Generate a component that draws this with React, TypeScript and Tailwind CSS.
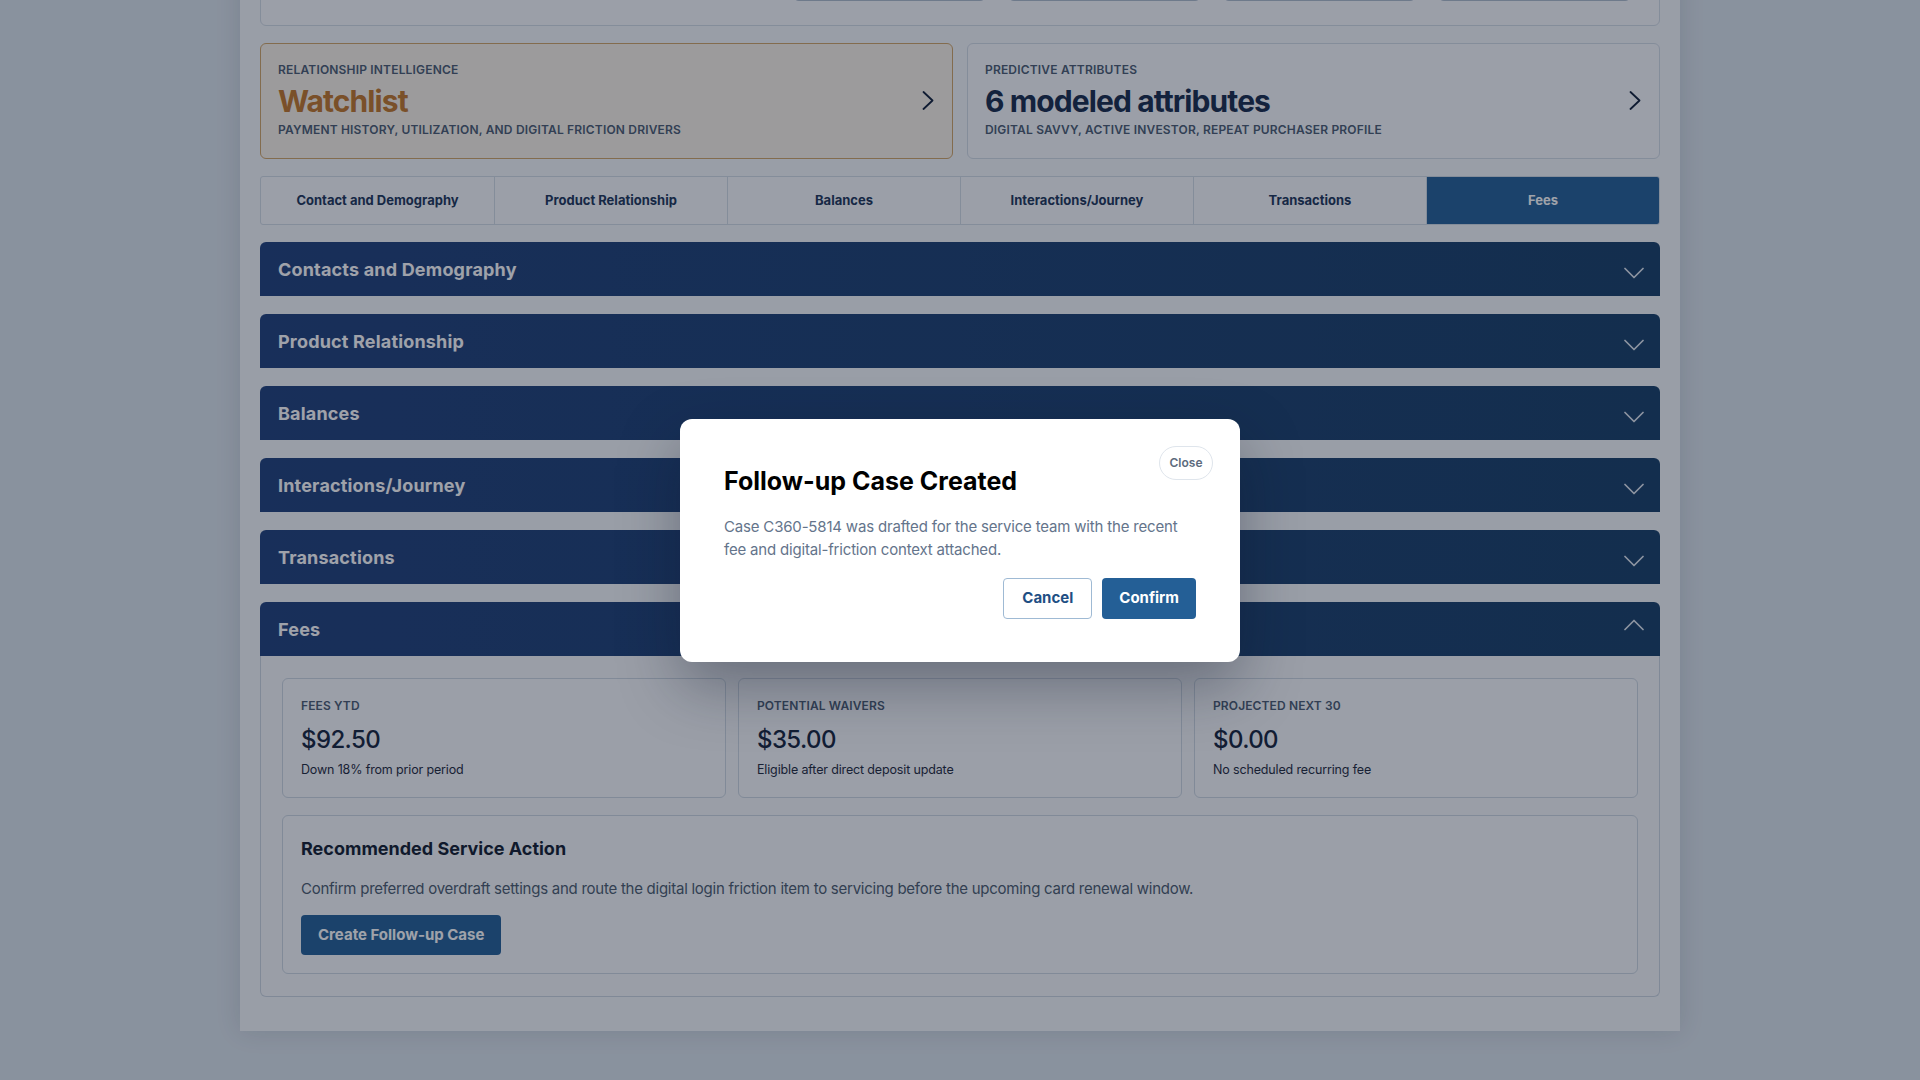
import React from 'react';

const sections = ['Contacts and Demography', 'Product Relationship', 'Balances', 'Interactions/Journey', 'Transactions'];
const tabs = ['Contact and Demography', 'Product Relationship', 'Balances', 'Interactions/Journey', 'Transactions', 'Fees'];

const metrics = [
  { label: 'Fees YTD', value: '$92.50', note: 'Down 18% from prior period' },
  { label: 'Potential Waivers', value: '$35.00', note: 'Eligible after direct deposit update' },
  { label: 'Projected Next 30', value: '$0.00', note: 'No scheduled recurring fee' },
];

function Chevron({ dir }: { dir: 'right' | 'down' | 'up' }) {
  if (dir === 'right') {
    return (
      <svg width="12" height="19" viewBox="0 0 12 19" fill="none" className="shrink-0 -translate-y-[1px]">
        <polyline points="1.5,1 10.5,9.5 1.5,18" stroke="#0f1f38" strokeWidth="1.8" strokeLinecap="round" strokeLinejoin="round" />
      </svg>
    );
  }
  return (
    <svg
      width="20"
      height="12"
      viewBox="0 0 20 12"
      fill="none"
      className={`shrink-0 ${dir === 'down' ? 'translate-y-[4px]' : '-translate-y-[4px]'}`}
    >
      <polyline
        points={dir === 'down' ? '1,1.5 10,10.5 19,1.5' : '1,10.5 10,1.5 19,10.5'}
        stroke="#e2e8f0"
        strokeWidth="1.7"
        strokeLinecap="round"
        strokeLinejoin="round"
      />
    </svg>
  );
}

function InsightCard({ label, title, sub, warn }: { label: string; title: string; sub: string; warn?: boolean }) {
  return (
    <div
      className={`flex h-[116px] items-center justify-between rounded-md border pl-[17px] pr-[18px] ${
        warn ? 'border-[#d1a566] bg-[#fbf4e8]' : 'border-[#d3dce5] bg-[#f8fafc]'
      }`}
    >
      <div className="min-w-0 -translate-y-[1px]">
        <div className="text-[12px] font-semibold uppercase leading-4 tracking-[0.015em] text-[#4a5b70]">{label}</div>
        <div className={`mt-[5px] text-[30px] font-bold leading-9 tracking-[-0.03em] ${warn ? 'text-[#c27729]' : 'text-[#162b4a]'}`}>
          {title}
        </div>
        <div className="mt-[3px] text-[12px] font-semibold uppercase leading-4 tracking-[0.015em] text-[#4a5b70]">{sub}</div>
      </div>
      <Chevron dir="right" />
    </div>
  );
}

function SectionHeader({ title, open }: { title: string; open?: boolean }) {
  return (
    <div className="flex h-[54px] items-center justify-between rounded-t-md bg-gradient-to-r from-[#1f407a] to-[#173f66] pl-[18px] pr-4">
      <span className="text-[18px] font-bold tracking-[0.01em] text-white">{title}</span>
      <Chevron dir={open ? 'up' : 'down'} />
    </div>
  );
}

export default function App() {
  return (
    <div className="relative h-[1080px] overflow-hidden bg-[#dbe4eb]" style={{ fontFamily: 'Inter, "Noto Sans", sans-serif' }}>
      <div className="mx-auto -mt-[84px] w-[1440px] bg-[#f5f8fa] px-5 pb-[34px] shadow-[0_0_24px_rgba(15,23,42,0.12)]">
        <div className="flex justify-end rounded-md border border-[#d3dce5] bg-[#f8fafc] px-7 pb-6 pt-6">
          <div className="flex gap-[22px]">
            {[0, 1, 2, 3].map((t) => (
              <div key={t} className="h-[60px] w-[193px] rounded-md border border-[#cfd8e2] border-b-[#aebccb] bg-white" />
            ))}
          </div>
        </div>

        <div className="mt-[17px] grid grid-cols-2 gap-[14px]">
          <InsightCard warn label="Relationship Intelligence" title="Watchlist" sub="Payment history, utilization, and digital friction drivers" />
          <InsightCard label="Predictive Attributes" title="6 modeled attributes" sub="Digital savvy, active investor, repeat purchaser profile" />
        </div>

        <div className="mt-[17px] grid h-[49px] grid-cols-6 overflow-hidden rounded-[3px] border border-[#d3dce5] bg-[#f8fafc]">
          {tabs.map((t, i) => (
            <div
              key={t}
              className={`flex items-center justify-center text-[13px] font-bold ${i > 0 ? 'border-l border-[#d3dce5]' : ''} ${
                t === 'Fees' ? 'bg-[#245f96] text-white' : 'text-[#1b3457]'
              }`}
            >
              {t}
            </div>
          ))}
        </div>

        <div className="mt-[17px] flex flex-col gap-[18px]">
          {sections.map((s) => (
            <SectionHeader key={s} title={s} />
          ))}

          <div>
            <SectionHeader title="Fees" open />
            <div className="rounded-b-md border border-t-0 border-[#ccd6e0] bg-[#f7f9fb] px-[21px] pb-[22px] pt-[22px]">
              <div className="grid grid-cols-3 gap-3">
                {metrics.map((m) => (
                  <div key={m.label} className="h-[120px] rounded-md border border-[#cdd7e1] bg-[#f8fafc] px-[18px] pt-[19px]">
                    <div className="text-[12px] font-semibold uppercase leading-4 tracking-[0.01em] text-[#4a5b70]">{m.label}</div>
                    <div className="mt-[10px] text-[24px] font-medium leading-8 tracking-[-0.025em] text-[#14233b]">{m.value}</div>
                    <div className="mt-[5px] text-[12.5px] leading-[18px] tracking-[-0.012em] text-[#1e293b]">{m.note}</div>
                  </div>
                ))}
              </div>

              <div className="mt-[17px] rounded-md border border-[#cdd7e1] bg-[#f8fafc] px-[18px] pb-[18px] pt-[19px]">
                <div className="text-[18px] font-bold leading-7 text-[#111c2e]">Recommended Service Action</div>
                <p className="mt-[14px] text-[15px] leading-6 tracking-[-0.017em] text-[#4b5a6d]">
                  Confirm preferred overdraft settings and route the digital login friction item to servicing before the upcoming card renewal window.
                </p>
                <button className="mt-[14px] h-10 rounded-[4px] bg-[#245f96] px-[17px] text-[15px] font-bold text-white">Create Follow-up Case</button>
              </div>
            </div>
          </div>
        </div>
      </div>

      <div className="absolute inset-0 flex items-center justify-center bg-[#0f172a]/40">
        <div className="relative w-[560px] rounded-xl bg-white px-11 pb-[43px] pt-[46px] shadow-[0_24px_60px_rgba(15,23,42,0.35)]">
          <button className="absolute right-[27px] top-[27px] h-[34px] w-[54px] rounded-full border border-[#dfe5ec] text-[12px] font-semibold text-[#5d6b7d]">
            Close
          </button>
          <h2 className="text-[25px] font-bold leading-8 text-black">Follow-up Case Created</h2>
          <p className="mt-[18px] text-[15px] leading-[23px] tracking-[-0.012em] text-[#64748b]">
            Case C360-5814 was drafted for the service team with the recent fee and digital-friction context attached.
          </p>
          <div className="mt-[17px] flex justify-end gap-[10px]">
            <button className="h-[41px] rounded-[4px] border border-[#9fbad4] bg-white px-[18px] text-[15px] font-bold text-[#1f4f84]">Cancel</button>
            <button className="h-[41px] rounded-[4px] bg-[#245f96] px-[17px] text-[15px] font-bold text-white">Confirm</button>
          </div>
        </div>
      </div>
    </div>
  );
}
